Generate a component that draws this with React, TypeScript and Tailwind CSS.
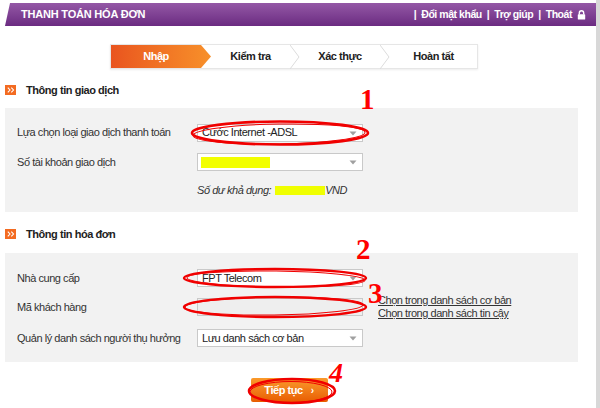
import type { ReactNode } from "react"

const font = { fontFamily: '"Liberation Sans", Arial, sans-serif' }
const serif = { fontFamily: '"Liberation Serif", serif' }

function Select({ children, disabled }: { children?: ReactNode; disabled?: boolean }) {
  return (
    <div
      className={
        "w-[166px] h-[18px] border flex items-center relative " +
        (disabled ? "bg-[#eeeeee] border-[#c9c9c9]" : "bg-white border-[#c9c9c9]")
      }
    >
      <div className="flex-1 pl-[4px] text-[11px] text-[#222] leading-none truncate">{children}</div>
      {!disabled && (
        <svg width="16" height="16" viewBox="0 0 16 16" className="mr-[1px]">
          <path d="M4.5 6.5 L11.5 6.5 L8 10.5 Z" fill="#a0a0a0" />
        </svg>
      )}
    </div>
  )
}

function SectionTitle({ title }: { title: string }) {
  return (
    <div className="flex items-center h-[16px] ml-[5px]">
      <div className="w-[11px] h-[10px] bg-[#f36b21] flex items-center justify-center">
        <svg width="8" height="6" viewBox="0 0 8 6">
          <path d="M0.8 0.6 L3 3 L0.8 5.4 M4.3 0.6 L6.5 3 L4.3 5.4" fill="none" stroke="#fff" strokeWidth="1.1" />
        </svg>
      </div>
      <span className="ml-[10px] text-[11px] font-bold text-[#222]">{title}</span>
    </div>
  )
}

function Chevron() {
  return (
    <svg width="10" height="24" viewBox="0 0 10 24" className="shrink-0">
      <polyline points="0,0 9,12 0,24" fill="none" stroke="#dcdcdc" strokeWidth="1" />
    </svg>
  )
}

function Row({ label, children }: { label: string; children: ReactNode }) {
  return (
    <div className="flex items-center h-[18px]">
      <div className="w-[180px] text-[11px] text-[#333]">{label}</div>
      {children}
    </div>
  )
}

export default function App() {
  return (
    <div className="w-[600px] h-[408px] bg-white flex relative overflow-hidden tracking-[-0.45px]" style={font}>
      <div className="w-[596px] flex flex-col">
        {/* header */}
        <div className="mt-[3px] ml-[5px] h-[23px] bg-gradient-to-b from-[#9458a6] to-[#6b2b81] flex items-center justify-between pl-[16px] pr-[10px] [clip-path:polygon(5px_0,100%_0,100%_100%,0_100%)]">
          <span className="text-white font-bold text-[11px] tracking-[-0.2px]">THANH TOÁN HÓA ĐƠN</span>
          <div className="flex items-center gap-[5px] text-white font-bold text-[10.5px]">
            <span>|</span>
            <span>Đổi mật khẩu</span>
            <span>|</span>
            <span>Trợ giúp</span>
            <span>|</span>
            <span>Thoát</span>
            <svg width="9" height="10" viewBox="0 0 9 10">
              <path d="M2.3 4.5 V3 a2.2 2.2 0 0 1 4.4 0 V4.5" fill="none" stroke="#fff" strokeWidth="1.4" />
              <rect x="0.8" y="4.3" width="7.4" height="5.2" rx="0.6" fill="#fff" />
            </svg>
          </div>
        </div>

        {/* steps */}
        <div className="mt-[18px] ml-[110px] w-[368px] h-[25px] flex border border-[#e6e6e6] bg-white shadow-[0_1px_2px_rgba(0,0,0,0.08)]">
          <div className="w-[100px] h-full bg-gradient-to-r from-[#e9541f] to-[#f7902a] flex items-center justify-center pr-[10px] [clip-path:polygon(0_0,90px_0,100%_50%,90px_100%,0_100%)] text-white font-bold text-[11px]">
            Nhập
          </div>
          <div className="w-[79px] flex items-center justify-center text-[11px] font-bold text-[#222]">Kiểm tra</div>
          <Chevron />
          <div className="w-[80px] flex items-center justify-center text-[11px] font-bold text-[#222]">Xác thực</div>
          <Chevron />
          <div className="flex-1 flex items-center justify-center text-[11px] font-bold text-[#222]">Hoàn tất</div>
        </div>

        <div className="mt-[13px]">
          <SectionTitle title="Thông tin giao dịch" />
        </div>

        <div className="mt-[10px] ml-[5px] w-[573px] h-[104px] bg-[#f2f2f2] pl-[12px] pt-[15px]">
          <div className="h-[19px] flex items-center">
            <Row label="Lựa chọn loại giao dịch thanh toán">
              <Select>Cước Internet -ADSL</Select>
            </Row>
          </div>
          <div className="mt-[11px]">
            <Row label="Số tài khoản giao dịch">
              <Select>
                <div className="w-[69px] h-[11px] bg-[#f2ff00] -ml-[1px]" />
              </Select>
            </Row>
          </div>
          <div className="mt-[12px] h-[14px] flex items-center ml-[180px] text-[11px] italic text-[#333]">
            <span>Số dư khả dụng:</span>
            <span className="ml-[4px] w-[50px] h-[9px] bg-[#f0ff00]" />
            <span>VND</span>
          </div>
        </div>

        <div className="mt-[14px]">
          <SectionTitle title="Thông tin hóa đơn" />
        </div>

        <div className="mt-[11px] ml-[5px] w-[573px] h-[109px] bg-[#f2f2f2] pl-[12px] pt-[16px]">
          <Row label="Nhà cung cấp">
            <Select>FPT Telecom</Select>
          </Row>
          <div className="mt-[11px]">
            <Row label="Mã khách hàng">
              <Select disabled />
              <div className="ml-[15px] h-[18px] flex flex-col justify-center text-[11px] leading-[13px] text-[#333] underline">
                <span>Chọn trong danh sách cơ bản</span>
                <span>Chọn trong danh sách tin cậy</span>
              </div>
            </Row>
          </div>
          <div className="mt-[13px]">
            <Row label="Quản lý danh sách người thụ hưởng">
              <Select>Lưu danh sách cơ bản</Select>
            </Row>
          </div>
        </div>

        <div className="mt-[16px] flex justify-center">
          <div className="ml-[-18px] w-[77px] h-[24px] rounded-[2px] bg-gradient-to-b from-[#fa9a2a] to-[#e85d00] flex items-center justify-center text-white font-bold text-[11px]">
            Tiếp tục
            <span className="ml-[8px] text-[10px]">›</span>
          </div>
        </div>
      </div>
      <div className="w-[4px] bg-[#d8d8d8]" />

      {/* annotations */}
      <svg className="absolute inset-0 pointer-events-none" width="600" height="408" viewBox="0 0 600 408">
        <g fill="none" stroke="#f00000">
          <ellipse cx="280" cy="133" rx="88" ry="11.5" strokeWidth="2.6" />
          <ellipse cx="279" cy="134" rx="86" ry="10" strokeWidth="1" transform="rotate(-1 279 134)" />
          <ellipse cx="275" cy="278" rx="91" ry="9" strokeWidth="2.4" />
          <ellipse cx="276" cy="279" rx="89" ry="8" strokeWidth="1" transform="rotate(0.8 276 279)" />
          <ellipse cx="275" cy="307" rx="91" ry="10" strokeWidth="2.4" />
          <ellipse cx="274" cy="306" rx="89" ry="9" strokeWidth="1" transform="rotate(-0.8 274 306)" />
          <ellipse cx="292" cy="391" rx="43" ry="12" strokeWidth="2.6" />
          <ellipse cx="291" cy="392" rx="41" ry="10.5" strokeWidth="1" />
        </g>
      </svg>
      <span className="absolute left-[360px] top-[85px] text-[#f00] font-bold text-[29px] leading-none" style={serif}>
        1
      </span>
      <span className="absolute left-[356px] top-[235px] text-[#f00] font-bold text-[29px] leading-none" style={serif}>
        2
      </span>
      <span className="absolute left-[368px] top-[279px] text-[#f00] font-bold text-[29px] leading-none" style={serif}>
        3
      </span>
      <span
        className="absolute left-[329px] top-[359px] text-[#f00] font-bold italic text-[28px] leading-none"
        style={serif}
      >
        4
      </span>
    </div>
  )
}
